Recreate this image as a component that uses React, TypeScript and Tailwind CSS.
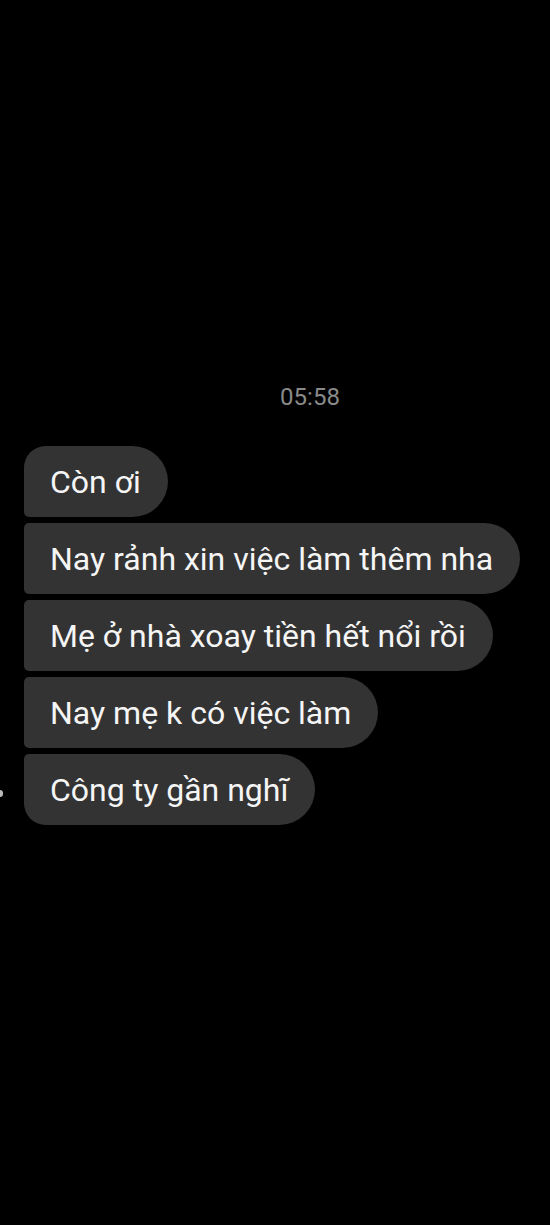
import React from 'react';

const messages = [
  'Còn ơi',
  'Nay rảnh xin việc làm thêm nha',
  'Mẹ ở nhà xoay tiền hết nổi rồi',
  'Nay mẹ k có việc làm',
  'Công ty gần nghĩ',
];

// first / last bubble of a group get the bigger left corner
function cornerClass(i: number, n: number) {
  if (i === 0) return 'rounded-[22px_36px_36px_5px]';
  if (i === n - 1) return 'rounded-[5px_36px_36px_22px]';
  return 'rounded-[5px_36px_36px_5px]';
}

export default function App() {
  return (
    <div className="w-[550px] h-[1225px] bg-black overflow-hidden" style={{ fontFamily: 'Roboto, "Noto Sans", sans-serif' }}>
      <div className="pt-[382px] pl-[70px] text-center text-[24px] leading-[30px] text-[#8a8a8a]">05:58</div>
      <div className="mt-[34px] flex flex-col gap-[6px]">
        {messages.map((m, i) => (
          <div key={i} className="flex items-center">
            <div className="w-[24px] flex items-center">
              {i === messages.length - 1 && <div className="w-[3px] h-[7px] mt-[8px] bg-[#bbbbbb] rounded-r-full" />}
            </div>
            <div className={`h-[71px] flex items-center pl-[26px] pr-[27px] bg-[#333333] ${cornerClass(i, messages.length)}`}>
              <span className="text-[32px] text-[#f5f5f5] whitespace-nowrap">{m}</span>
            </div>
          </div>
        ))}
      </div>
    </div>
  );
}
